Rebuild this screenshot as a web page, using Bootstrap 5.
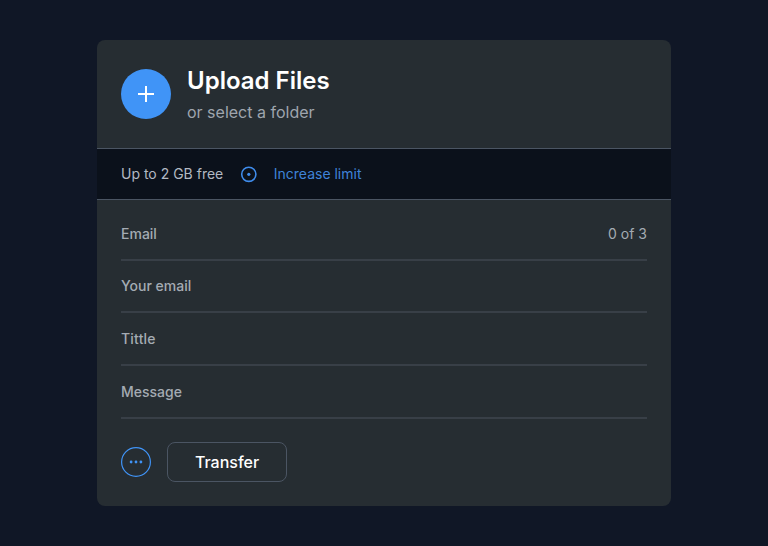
<!DOCTYPE html>
<html lang="en">
<head>
<meta charset="utf-8">
<meta name="viewport" content="width=device-width, initial-scale=1">
<title>Upload Files</title>
<link href="https://cdn.jsdelivr.net/npm/bootstrap@5.3.0/dist/css/bootstrap.min.css" rel="stylesheet">
<style>
body{background:#101726;font-family:Inter,"Liberation Sans",sans-serif;font-size:14px;line-height:20px;color:#b3b9c3}
.panel{width:574px;height:466px;margin-top:40px;background:#262d32;border-radius:8px}
.panel-head{height:108px}
.add-btn{width:50px;height:50px;background:#4094f7}
.panel-title{font-size:24px;line-height:32px;font-weight:600;color:#fff;padding-top:1px}
.panel-sub{font-size:16px;line-height:24px;color:#9fa5ae;margin-top:3px}
.limit-bar{height:52px;background:#0b111b;border-top:1px solid #4b5563;border-bottom:1px solid #4b5563}
.limit-icon{margin-left:17px;margin-right:16.5px}
.limit-link{color:#3f83d8}
.field{height:53px;border-bottom:2px solid #383f47;font-weight:500;color:#a4abb3}
.field-short{height:52px}
.field-title{letter-spacing:.2px}
.field-count{font-weight:400}
.transfer{width:120px;height:40px;--bs-btn-color:#fff;--bs-btn-border-color:#4b5563;--bs-btn-hover-color:#fff;--bs-btn-hover-border-color:#6b7280;--bs-btn-border-radius:8px;--bs-btn-font-size:16px;--bs-btn-font-weight:500;--bs-btn-padding-y:0}
.actions{margin-top:23px}
</style>
</head>
<body>
<main class="panel mx-auto overflow-hidden">
  <header class="panel-head d-flex align-items-center px-4 gap-3">
    <button class="add-btn btn rounded-circle border-0 p-0 d-flex align-items-center justify-content-center" aria-label="Add files">
      <svg width="18" height="18" viewBox="0 0 18 18" fill="none" stroke="#fff" stroke-width="2"><path d="M9 1v16M1 9h16"/></svg>
    </button>
    <div>
      <h1 class="panel-title mb-0">Upload Files</h1>
      <p class="panel-sub mb-0">or select a folder</p>
    </div>
  </header>
  <div class="limit-bar d-flex align-items-center px-4">
    <span>Up to 2 GB free</span>
    <svg class="limit-icon" width="17" height="17" viewBox="0 0 17 17" fill="none"><circle cx="8.8" cy="8.3" r="7.1" stroke="#3f8cec" stroke-width="1.6"/><circle cx="8.8" cy="8.3" r="1.6" fill="#3f8cec"/></svg>
    <a class="limit-link text-decoration-none" href="#">Increase limit</a>
  </div>
  <form class="px-4 pt-2">
    <div class="field d-flex align-items-center justify-content-between"><span>Email</span><span class="field-count">0 of 3</span></div>
    <div class="field field-short d-flex align-items-center">Your email</div>
    <div class="field field-title d-flex align-items-center">Tittle</div>
    <div class="field d-flex align-items-center">Message</div>
    <div class="actions d-flex align-items-center gap-3">
      <button type="button" class="btn border-0 p-0 d-flex" aria-label="More options">
        <svg width="30" height="30" viewBox="0 0 30 30" fill="#4094f7"><circle cx="15" cy="15" r="14.4" fill="none" stroke="#4094f7" stroke-width="1.2"/><circle cx="10.1" cy="15" r="1.4"/><circle cx="15" cy="15" r="1.4"/><circle cx="19.9" cy="15" r="1.4"/></svg>
      </button>
      <button type="button" class="transfer btn">Transfer</button>
    </div>
  </form>
</main>
<script src="https://cdn.jsdelivr.net/npm/bootstrap@5.3.0/dist/js/bootstrap.bundle.min.js"></script>
</body>
</html>
